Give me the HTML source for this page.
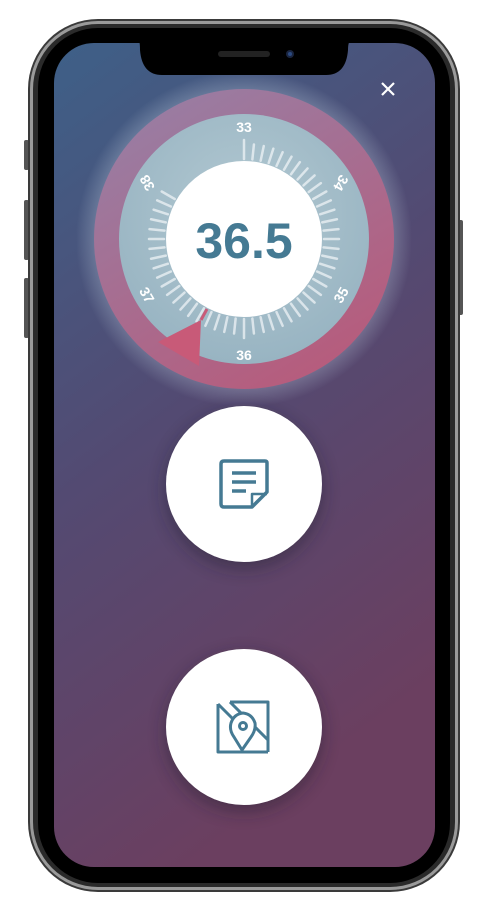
<!DOCTYPE html>
<html><head><meta charset="utf-8"><style>
html,body{margin:0;padding:0;background:#fff;width:485px;height:908px;overflow:hidden}
svg{display:block}
text{font-family:"Liberation Sans",sans-serif}
</style></head><body>
<svg width="485" height="908" viewBox="0 0 485 908" xmlns="http://www.w3.org/2000/svg">
<defs>
<linearGradient id="bg" x1="0" y1="0" x2="0.35" y2="1">
<stop offset="0" stop-color="#3e6088"/>
<stop offset="0.5" stop-color="#534a72"/>
<stop offset="1" stop-color="#6b3f60"/>
</linearGradient>
<linearGradient id="ring" x1="0.2" y1="0" x2="0.8" y2="1">
<stop offset="0" stop-color="#987ea4"/>
<stop offset="1" stop-color="#b85a7a"/>
</linearGradient>
<radialGradient id="disk" cx="0.5" cy="0.4" r="0.6">
<stop offset="0" stop-color="#b3c9d2"/>
<stop offset="1" stop-color="#98b4c2"/>
</radialGradient>
<radialGradient id="glow" cx="0.5" cy="0.5" r="0.5">
<stop offset="0.8" stop-color="#c8d8e6" stop-opacity="0.45"/>
<stop offset="1" stop-color="#c8d8e6" stop-opacity="0"/>
</radialGradient>
<filter id="blur" x="-50%" y="-50%" width="200%" height="200%"><feGaussianBlur stdDeviation="9"/></filter>
<clipPath id="scr"><rect x="54" y="43" width="381" height="824" rx="40"/></clipPath>
</defs>
<rect x="24" y="140" width="5" height="30" rx="2" fill="#555"/>
<rect x="24" y="200" width="5" height="60" rx="2" fill="#555"/>
<rect x="24" y="278" width="5" height="60" rx="2" fill="#555"/>
<rect x="458" y="220" width="5" height="95" rx="2" fill="#555"/>
<rect x="28" y="19" width="432" height="873" rx="70" fill="#3a3a3a"/>
<rect x="30" y="21" width="428" height="869" rx="68" fill="#9a9a9a"/>
<rect x="33" y="24" width="422" height="863" rx="65" fill="#2a2a2a"/>
<rect x="38" y="28" width="412" height="855" rx="60" fill="#000"/>
<g clip-path="url(#scr)">
<rect x="54" y="43" width="381" height="824" fill="url(#bg)"/>
<circle cx="244" cy="239" r="168" fill="url(#glow)"/>
<circle cx="244" cy="239" r="150" fill="url(#ring)"/>
<circle cx="244" cy="239" r="125" fill="url(#disk)"/>
<g id="ticks" stroke="#eef3f6" stroke-width="2.5" stroke-linecap="round" opacity="0.75"></g>
<g fill="#fff" font-size="14" font-weight="bold" text-anchor="middle">
<text x="244" y="132">33</text>
<text x="341" y="188" transform="rotate(120 341 183)">34</text>
<text x="341" y="300" transform="rotate(-60 341 295)">35</text>
<text x="244" y="360">36</text>
<text x="147" y="300" transform="rotate(60 147 295)">37</text>
<text x="147" y="188" transform="rotate(240 147 183)">38</text>
</g>
<polygon points="158,342 201,320 199,366" fill="#c85a78"/>
<line x1="201" y1="320" x2="207" y2="309" stroke="#c85a78" stroke-width="3"/>
<circle cx="244" cy="239" r="78" fill="#fff"/>
<text x="244" y="258" text-anchor="middle" font-size="50" font-weight="bold" fill="#457a93">36.5</text>
<path d="M382 83 L394 95 M394 83 L382 95" stroke="#fff" stroke-width="2.2"/>
<circle cx="244" cy="490" r="78" fill="#1a1a2a" opacity="0.45" filter="url(#blur)"/>
<circle cx="244" cy="484" r="78" fill="#fff"/>
<circle cx="244" cy="733" r="78" fill="#1a1a2a" opacity="0.45" filter="url(#blur)"/>
<circle cx="244" cy="727" r="78" fill="#fff"/>
</g>
<path d="M135 40 L138 40 Q140 40 140 50 Q142 75 162 75 L326 75 Q346 75 348 50 Q348 40 352 40 Z" fill="#000"/>
<rect x="218" y="51" width="52" height="6" rx="3" fill="#222"/>
<circle cx="290" cy="54" r="4" fill="#1a2540"/>
<circle cx="290" cy="54" r="2" fill="#2c4a80"/>
<g fill="none" stroke="#457a93" stroke-width="3.5" stroke-linejoin="round">
<path d="M224 461 H265 Q267 461 267 463 V492 L252 507 H224 Q221 507 221 504 V464 Q221 461 224 461 Z"/>
<path d="M252 507 V494 H267" stroke-width="2.5"/>
</g>
<g stroke="#457a93" stroke-width="3.5">
<line x1="232" y1="473" x2="256" y2="473"/>
<line x1="232" y1="482" x2="256" y2="482"/>
<line x1="232" y1="491" x2="246" y2="491"/>
</g>
<g fill="none" stroke="#457a93" stroke-width="3" stroke-linejoin="round">
<path d="M218 704 V752 H268"/>
<path d="M268 752 V702 H230"/>
<path d="M218 704 L247 733 M230 702 L268 740"/>
<path d="M242 750 L234 737 Q229 730 231 723 Q234 714 243 713 Q252 714 255 723 Q256 730 251 737 Z" fill="#fff"/>
<circle cx="243" cy="726" r="3.5"/>
</g>
</svg>
<script>
var g=document.getElementById('ticks'),s='';
for(var i=0;i<=50;i++){var a=i*6*Math.PI/180;var r1=80,r2=i%30==0?99:95;
var x1=244+r1*Math.sin(a),y1=239-r1*Math.cos(a),x2=244+r2*Math.sin(a),y2=239-r2*Math.cos(a);
s+='<line x1="'+x1+'" y1="'+y1+'" x2="'+x2+'" y2="'+y2+'"/>';}
g.innerHTML=s;
</script>
</body></html>
